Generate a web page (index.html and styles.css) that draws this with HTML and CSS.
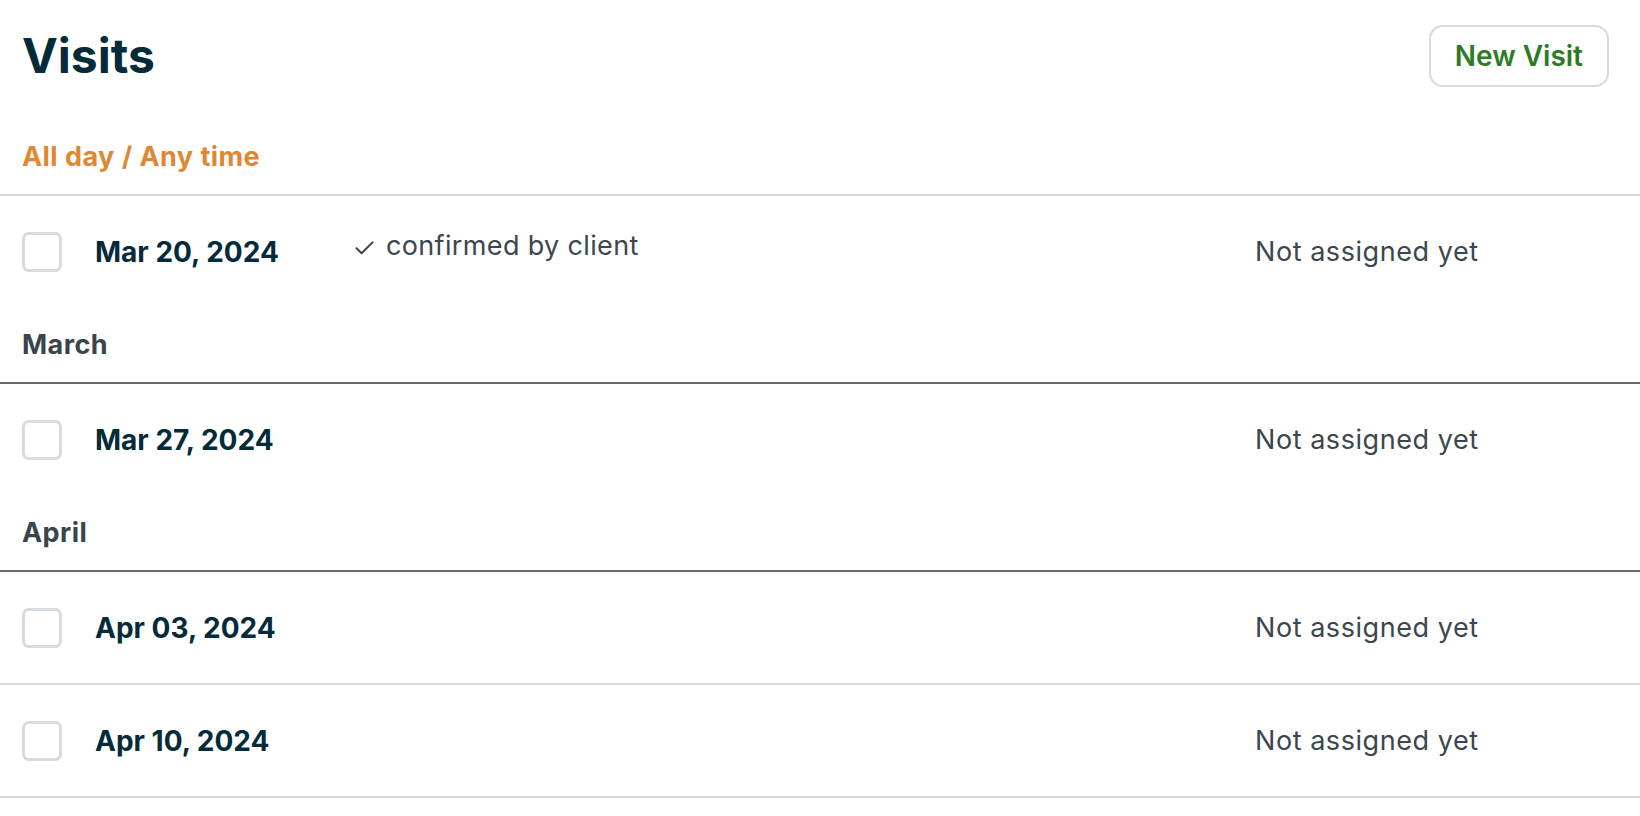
FILE: index.html
```html
<!DOCTYPE html>
<html lang="en">
<head>
<meta charset="utf-8">
<title>Visits</title>
<link rel="stylesheet" href="styles.css">
</head>
<body>
<div class="page">
  <header class="topbar">
    <h1 class="title">Visits</h1>
    <button class="btn" type="button">New Visit</button>
  </header>

  <div class="group-head group-head--light group-head--first">
    <span class="group-label group-label--orange">All day / Any time</span>
  </div>
  <div class="visit">
    <span class="checkbox"></span>
    <span class="visit-date">Mar 20, 2024</span>
    <span class="visit-confirm">
      <svg class="check" width="19" height="14" viewBox="0 0 19 14" aria-hidden="true"><path d="M1.5 7.2 L6.6 12.2 L17.5 1.4" fill="none" stroke="#3b464e" stroke-width="2" stroke-linecap="round" stroke-linejoin="round"/></svg>
      <span>confirmed by client</span>
    </span>
    <span class="visit-assigned">Not assigned yet</span>
  </div>

  <div class="group-head">
    <span class="group-label">March</span>
  </div>
  <div class="visit">
    <span class="checkbox"></span>
    <span class="visit-date">Mar 27, 2024</span>
    <span class="visit-confirm"></span>
    <span class="visit-assigned">Not assigned yet</span>
  </div>

  <div class="group-head">
    <span class="group-label">April</span>
  </div>
  <div class="visit visit--ruled">
    <span class="checkbox"></span>
    <span class="visit-date">Apr 03, 2024</span>
    <span class="visit-confirm"></span>
    <span class="visit-assigned">Not assigned yet</span>
  </div>
  <div class="visit visit--ruled">
    <span class="checkbox"></span>
    <span class="visit-date">Apr 10, 2024</span>
    <span class="visit-confirm"></span>
    <span class="visit-assigned">Not assigned yet</span>
  </div>
</div>
</body>
</html>
```
FILE: styles.css
```css
* { box-sizing: border-box; }

html, body {
  margin: 0;
  padding: 0;
  background: #ffffff;
}

body {
  font-family: Inter, "Noto Sans", "Liberation Sans", sans-serif;
  color: #3b464e;
}

.page {
  width: 100%;
}

.topbar {
  display: flex;
  justify-content: space-between;
  align-items: center;
  padding: 25px 31px 0 22px;
  height: 87px;
}

.title {
  margin: 0;
  font-size: 48px;
  line-height: 58px;
  font-weight: 700;
  color: #032b3a;
}

.btn {
  height: 62px;
  padding: 0 24px;
  border: 2px solid #d5dadd;
  border-radius: 14px;
  background: #ffffff;
  font-family: inherit;
  font-size: 28px;
  font-weight: 600;
  color: #2e7b27;
  line-height: 1;
  cursor: pointer;
}

.group-head {
  padding: 22px 22px 21px;
  border-bottom: 2px solid #5e6d78;
}

.group-head--light {
  border-bottom-color: #d6dadd;
}

.group-head--first {
  padding-top: 54px;
}

.group-label {
  display: block;
  font-size: 27px;
  line-height: 32px;
  font-weight: 700;
  letter-spacing: 0.45px;
  color: #39444c;
}

.group-label--orange {
  color: #de8734;
}

.visit {
  display: flex;
  align-items: center;
  height: 111px;
  padding: 0 31px 0 22px;
}

.visit--ruled {
  height: 113px;
  border-bottom: 2px solid #d6dadd;
}

.checkbox {
  flex: none;
  width: 40px;
  height: 40px;
  border: 3px solid #d6dbdd;
  border-radius: 7px;
  margin-right: 33px;
}

.visit-date {
  flex: none;
  width: 260px;
  font-size: 28px;
  line-height: 34px;
  font-weight: 700;
  color: #032b3a;
}

.visit-confirm {
  flex: 1;
  display: flex;
  align-items: center;
  gap: 12px;
  font-size: 27px;
  line-height: 32px;
  letter-spacing: 0.35px;
  color: #3b464e;
  margin-bottom: 12px;
}

.check {
  flex: none;
  margin-top: 4px;
}

.visit-assigned {
  flex: none;
  width: 354px;
  font-size: 27px;
  line-height: 32px;
  letter-spacing: 0.55px;
  color: #3b464e;
}
```
